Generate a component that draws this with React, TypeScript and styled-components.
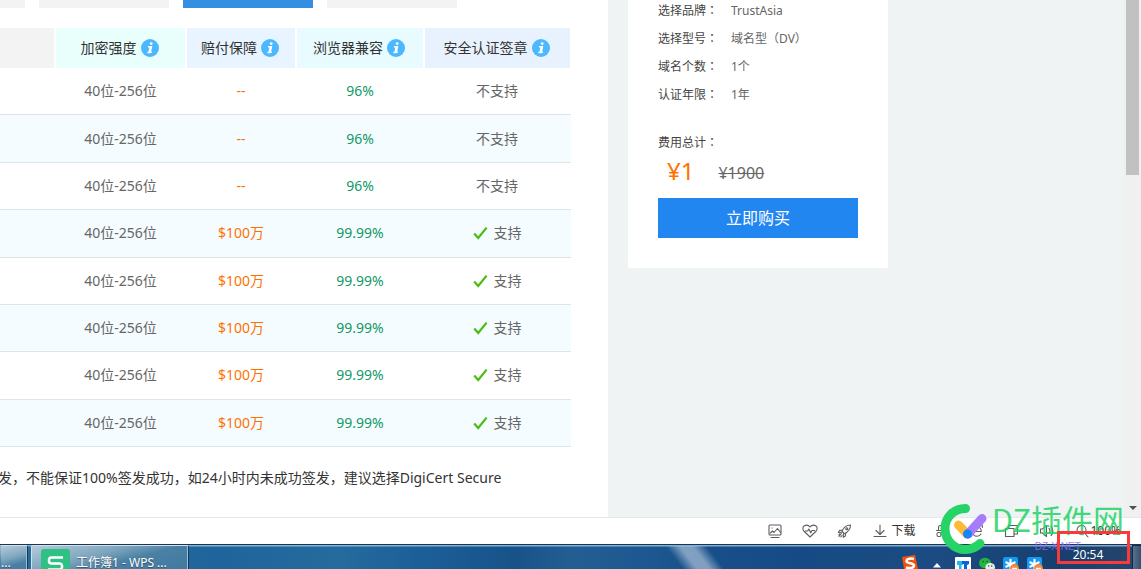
import React from "react";
import styled, { createGlobalStyle } from "styled-components";

const GlobalStyle = createGlobalStyle`
  * { box-sizing: border-box; }
  html, body { margin: 0; padding: 0; overflow: hidden; }
  body {
    background: #fff;
    color: #666;
    font-family: "Noto Sans", "Noto Sans CJK SC", sans-serif;
    font-size: 14px;
    line-height: 20px;
  }
`;

const Screen = styled.div`
  position: relative;
  display: flex;
  flex-direction: column;
  height: 100vh;
  overflow: hidden;
`;

const Viewport = styled.div`
  display: flex;
  flex: 1;
  min-height: 0;
  overflow: hidden;
`;

const Content = styled.main`
  flex: 0 0 608px;
  overflow: hidden;
`;

const Tabs = styled.div`
  display: flex;
  gap: 14px;
  margin-bottom: 20px;
`;

const Tab = styled.div<{ $active?: boolean; $cut?: boolean }>`
  width: ${(p) => (p.$cut ? "25px" : "130px")};
  height: 8px;
  background: ${(p) => (p.$active ? "#368ee0" : "#f3f3f3")};
`;

const Table = styled.table`
  width: 571px;
  height: 419px;
  table-layout: fixed;
  border-collapse: separate;
  border-spacing: 0;
  text-align: center;
`;

const HeadCell = styled.th<{ $bg: string; $width: number }>`
  width: ${(p) => p.$width}px;
  height: 40px;
  padding: 0 2px 0 0;
  background: ${(p) => p.$bg};
  border-right: 2px solid #fff;
  color: #333;
  font-weight: 400;
  &:last-child { border-right-width: 1px; }
`;

const HeadLabel = styled.span`
  display: flex;
  align-items: center;
  justify-content: center;
  gap: 4px;
`;

const Row = styled.tr`
  &:nth-child(even) { background: #f4fcff; }
`;

const Cell = styled.td<{ $color?: string }>`
  padding: 0 2px 0 0;
  border-bottom: 1px solid #dfe4e8;
  color: ${(p) => p.$color || "#666"};
`;

const CellContent = styled.div`
  display: flex;
  align-items: center;
  justify-content: center;
  gap: 6px;
  height: 20px;
`;

const Footnote = styled.p`
  height: 20px;
  margin: 21px 0 0 -2px;
  color: #333;
  white-space: nowrap;
`;

const Side = styled.aside`
  flex: 1;
  padding-left: 20px;
  background: #eff3f4;
`;

const Card = styled.section`
  width: 260px;
  padding: 1px 30px 30px;
  background: #fff;
  font-size: 12px;
`;

const Specs = styled.dl`
  display: grid;
  grid-template-columns: 60px 1fr;
  grid-auto-rows: 20px;
  gap: 8px 13px;
  margin: 0 0 28px;
`;

const Term = styled.dt`
  color: #444;
  white-space: nowrap;
`;

const Value = styled.dd`
  margin: 0;
`;

const Colon = styled.span`
  font-family: "Noto Sans CJK JP", sans-serif;
  line-height: 0;
`;

const TotalLabel = styled.div`
  height: 20px;
  color: #444;
`;

const Prices = styled.div`
  display: flex;
  align-items: center;
  gap: 24px;
  height: 35px;
  margin-bottom: 10px;
  padding-left: 9px;
`;

const Price = styled.strong`
  color: #ff7200;
  font-size: 24px;
  font-weight: 400;
`;

const OldPrice = styled.del`
  font-size: 16px;
  padding-top: 4px;
`;

const BuyButton = styled.button`
  display: block;
  width: 100%;
  height: 40px;
  padding: 0;
  border: 0;
  background: #2186ef;
  color: #fff;
  font: inherit;
  font-size: 16px;
`;

const Scrollbar = styled.div`
  display: flex;
  flex-direction: column;
  justify-content: space-between;
  align-items: center;
  flex: 0 0 17px;
  background: #f0f0f0;
`;

const Thumb = styled.div`
  width: 13px;
  height: 175px;
  background: #c1c1c1;
`;

const ScrollArrow = styled.svg`
  display: block;
  margin-bottom: 5px;
`;

const StatusBar = styled.div`
  display: flex;
  align-items: center;
  justify-content: flex-end;
  gap: 19px;
  height: 27px;
  padding-right: 20px;
  border-top: 1px solid #e6e9ea;
  background: #fff;
`;

const ToolButton = styled.button<{ $gap: number }>`
  display: flex;
  align-items: center;
  gap: ${(p) => p.$gap}px;
  padding: 0;
  border: 0;
  background: none;
  color: #333;
  font: inherit;
  font-size: 12px;
  white-space: nowrap;
`;

const TaskBar = styled.footer`
  height: 25px;
  overflow: hidden;
  border-top: 1px solid #1c3550;
  background:
    linear-gradient(180deg, rgba(160, 205, 240, 0.75) 0, rgba(160, 205, 240, 0.75) 1px, transparent 2px),
    linear-gradient(90deg, #2a6d9c 0, #1f659b 220px, #256b9d 340px, #1c5f97 420px, #175389 515px, #235e93 570px, #1d5990 640px, #185089 700px, #174a84 800px, #1b4b82 940px, #173f6e 1060px, #27466b 100%);
`;

const TaskRow = styled.div`
  position: relative;
  display: flex;
  align-items: flex-start;
  height: 40px;
`;

const Beam = styled.svg`
  position: absolute;
  left: 660px;
  top: 1px;
`;

const TaskButton = styled.button<{ $width: number }>`
  display: flex;
  align-items: center;
  gap: 6px;
  flex: 0 0 ${(p) => p.$width}px;
  height: 40px;
  margin-right: 3px;
  padding: 0 0 4px ${(p) => (p.$width > 100 ? "9px" : "0")};
  border: 1px solid #123a5c;
  border-top-color: #cfe2ee;
  border-left-color: ${(p) => (p.$width > 100 ? "#cfe2ee" : "transparent")};
  border-radius: 2px;
  background: linear-gradient(165deg, #b4cbd9 0, #7ea5be 32%, #4a80a4 50%, #3a769f 100%);
  box-shadow: inset -1px 0 0 #9fc0d4;
  color: #fff;
  font: inherit;
  font-size: 12px;
  line-height: 16px;
  white-space: nowrap;
  overflow: hidden;
  text-shadow: 0 1px 1px rgba(0, 0, 0, 0.4);
`;

const Tray = styled.div`
  position: relative;
  display: flex;
  align-items: center;
  gap: 8px;
  height: 40px;
  margin-left: auto;
`;

const Clock = styled.time`
  align-self: flex-start;
  width: 48px;
  margin-left: 13px;
  color: #fff;
  font-size: 12px;
  text-align: center;
`;

const ShowDesktop = styled.button`
  width: 9px;
  height: 40px;
  margin-left: 12px;
  padding: 0;
  border: 1px solid #102a48;
  border-right: 0;
  background: linear-gradient(90deg, #58718c, #33506f);
`;

const Watermark = styled.div`
  position: absolute;
  right: 17px;
  bottom: 14px;
  display: flex;
  align-items: center;
  gap: 4px;
  height: 52px;
  pointer-events: none;
`;

const WatermarkText = styled.div`
  display: flex;
  flex-direction: column;
  color: #25d366;
  font-family: "Noto Sans CJK SC", sans-serif;
  font-size: 31px;
  font-weight: 400;
  line-height: 32px;
  white-space: nowrap;
  opacity: 0.85;
`;

const WatermarkSite = styled.small`
  margin-top: 4px;
  padding-left: 43px;
  color: #8f6cf0;
  font-family: "Liberation Sans", sans-serif;
  font-size: 10px;
  font-weight: 400;
  line-height: 16px;
`;

const Highlight = styled.div`
  position: absolute;
  right: 11px;
  bottom: 5px;
  width: 73px;
  height: 33px;
  border: 3px solid #f93a3a;
  pointer-events: none;
`;

const InfoIcon = () => (
  <svg width="18" height="18" viewBox="0 0 18 18" aria-hidden="true">
    <circle cx="9" cy="9" r="9" fill="#4cb8ff" />
    <circle cx="10.2" cy="4.6" r="1.4" fill="#fff" />
    <path d="M7 7.7h3.4L9.2 13.3h1.6M6.4 13.6h3" fill="none" stroke="#fff" strokeWidth="1.5" />
    <path d="M9.6 7.5 8.3 13.6" stroke="#fff" strokeWidth="2" />
  </svg>
);

const CheckIcon = () => (
  <svg width="15" height="14" viewBox="0 0 15 14" aria-hidden="true">
    <path d="M1.2 7.6 5.2 12 13.6 1.6" fill="none" stroke="#4dbb12" strokeWidth="2.2" />
  </svg>
);

const Glyph = ({ children }: { children: React.ReactNode }) => (
  <svg
    width="16"
    height="16"
    viewBox="0 0 16 16"
    fill="none"
    stroke="#5c5c62"
    strokeWidth="1.1"
    strokeLinecap="round"
    strokeLinejoin="round"
    aria-hidden="true"
  >
    {children}
  </svg>
);

const tools: { label: string; text?: string; gap?: number; icon: React.ReactNode }[] = [
  {
    label: "图片",
    icon: (
      <>
        <rect x="2" y="2" width="12" height="10" rx="1" />
        <path d="M3.500 10 5.500 8 7 9.500l3.500-4 3 4M4 14.500h8M4.900 5h.2" />
      </>
    ),
  },
  {
    label: "健康",
    icon: (
      <>
        <path d="M8 14 1.8 8C.4 6.2.6 3.9 2.3 2.8 4.2 1.7 6.6 2.2 8 4c1.400-1.800 3.800-2.300 5.700-1.200 1.700 1.100 1.900 3.400.5 5.200z" />
        <path d="M3.500 8h2.200l1.200-2 1.800 3.800 1.300-2.300h2.500" />
      </>
    ),
  },
  {
    label: "加速",
    icon: (
      <>
        <path d="M5 8.2C6.5 4.5 9.5 2 13.5 2c0 4-2.500 7-6.200 8.700zM5.600 7 2.500 7.400 1.300 9.500l3.500-.3M8.700 10l-.3 3-2.200 1.200.2-3.400" />
        <circle cx="9.8" cy="5.8" r="1" />
        <path d="M4.300 10.500 2 13.500M2.800 10.800l-1 1.200M5 12.500l-1.200 1.300" />
      </>
    ),
  },
  { label: "下载", text: "下载", gap: 3, icon: <path d="M8 2v9M4 7.500l4 4 4-4M2 13.500h12" /> },
  {
    label: "无痕",
    icon: (
      <>
        <path d="M4.500 7V4.500c0-1.500.8-2 2-2h4c1.200 0 2 .5 2 2V7M2.500 7.500h12" />
        <rect x="3" y="9.5" width="4" height="4" rx="1.5" />
        <rect x="10" y="9.5" width="4" height="4" rx="1.5" />
        <path d="M7 11h3" />
      </>
    ),
  },
  {
    label: "浏览器模式",
    icon: <path d="M4 8.500h8.300C12.300 5.500 10.500 3.800 8 3.800c-2.700 0-4.600 2-4.600 4.700s2 4.700 4.600 4.700c1.800 0 3.200-.8 4-2.200M2.500 13.500c-.8-1.500.2-4 1.500-6M10.500 2.500c2.500-.8 3.500.2 2.800 2" />,
  },
  { label: "窗口", icon: <path d="M4.5 5.5v-3h9V11H10M1.500 5.500H10v8H1.500z" /> },
  { label: "声音", icon: <path d="M1.5 6v4h2l4 3.500v-11L3.500 6zM10 5.500c1.300 1.200 1.300 3.800 0 5M12 3.500c2.500 2.500 2.500 6.500 0 9" /> },
  {
    label: "缩放",
    text: "100%",
    gap: 0,
    icon: (
      <>
        <circle cx="7.5" cy="7" r="4.5" />
        <path d="m11 10.500 3 3.500" />
      </>
    ),
  },
];

const columns = [
  { title: "", width: 56, bg: "#f3f3f3" },
  { title: "加密强度", width: 131, bg: "#e8fffc" },
  { title: "赔付保障", width: 110, bg: "#e8f4ff" },
  { title: "浏览器兼容", width: 128, bg: "#e8fbff" },
  { title: "安全认证签章", width: 146, bg: "#e8f2ff" },
];

const basic = { payout: "--", browsers: "96%", seal: false };
const full = { payout: "$100万", browsers: "99.99%", seal: true };
const plans = [basic, basic, basic, full, full, full, full, full];

const specs = [
  ["选择品牌", "TrustAsia"],
  ["选择型号", "域名型（DV）"],
  ["域名个数", "1个"],
  ["认证年限", "1年"],
];

const SecurityIcon = () => (
  <svg width="16" height="16" viewBox="0 0 16 16" aria-hidden="true">
    <rect width="15" height="15" rx="2" fill="#129af5" />
    <path d="M7.500 2v11M2.500 5l10 5M2.500 10l10-5" stroke="#fff" strokeWidth="2" />
    <circle cx="11.5" cy="11.5" r="4.5" fill="#f58a32" />
    <path d="M9 11.500h5" stroke="#fff" strokeWidth="1.5" />
  </svg>
);

export default function App() {
  return (
    <Screen>
      <GlobalStyle />
      <Viewport>
        <Content>
          <Tabs aria-hidden="true">
            <Tab $cut />
            <Tab />
            <Tab $active />
            <Tab />
          </Tabs>
          <Table>
            <thead>
              <tr>
                {columns.map((c) => (
                  <HeadCell key={c.width} $bg={c.bg} $width={c.width} scope="col">
                    {c.title && (
                      <HeadLabel>
                        {c.title}
                        <InfoIcon />
                      </HeadLabel>
                    )}
                  </HeadCell>
                ))}
              </tr>
            </thead>
            <tbody>
              {plans.map((p, i) => (
                <Row key={i}>
                  <Cell />
                  <Cell>
                    <CellContent>40位-256位</CellContent>
                  </Cell>
                  <Cell $color="#ff7200">
                    <CellContent>{p.payout}</CellContent>
                  </Cell>
                  <Cell $color="#119966">
                    <CellContent>{p.browsers}</CellContent>
                  </Cell>
                  <Cell>
                    <CellContent>
                      {p.seal && <CheckIcon />}
                      {p.seal ? "支持" : "不支持"}
                    </CellContent>
                  </Cell>
                </Row>
              ))}
            </tbody>
          </Table>
          <Footnote>
            发，不能保证100%签发成功，如24小时内未成功签发，建议选择DigiCert Secure
          </Footnote>
        </Content>
        <Side>
          <Card>
            <Specs>
              {specs.map(([name, value]) => (
                <React.Fragment key={name}>
                  <Term>
                    {name}
                    <Colon>：</Colon>
                  </Term>
                  <Value>{value}</Value>
                </React.Fragment>
              ))}
            </Specs>
            <TotalLabel>
              费用总计<Colon>：</Colon>
            </TotalLabel>
            <Prices>
              <Price>¥1</Price>
              <OldPrice>¥1900</OldPrice>
            </Prices>
            <BuyButton type="button">立即购买</BuyButton>
          </Card>
        </Side>
        <Scrollbar aria-hidden="true">
          <Thumb />
          <ScrollArrow width="8" height="8" viewBox="0 0 8 8">
            <path d="M0 2h8L4 6z" fill="#505050" />
          </ScrollArrow>
        </Scrollbar>
      </Viewport>
      <StatusBar>
        {tools.map((t) => (
          <ToolButton key={t.label} type="button" aria-label={t.label} $gap={t.gap ?? 0}>
            <Glyph>{t.icon}</Glyph>
            {t.text}
          </ToolButton>
        ))}
      </StatusBar>
      <TaskBar>
        <TaskRow>
          <Beam width="70" height="24" viewBox="0 0 70 24" aria-hidden="true">
            <defs>
              <linearGradient id="beam" gradientUnits="userSpaceOnUse" x1="16" y1="14" x2="42" y2="-6">
                <stop offset="0" stopColor="#c5d3e6" stopOpacity="0" />
                <stop offset="0.35" stopColor="#c5d3e6" stopOpacity="0.6" />
                <stop offset="0.65" stopColor="#c5d3e6" stopOpacity="0.6" />
                <stop offset="1" stopColor="#c5d3e6" stopOpacity="0" />
              </linearGradient>
            </defs>
            <path d="M0 0h70v24H0z" fill="url(#beam)" />
          </Beam>
          <TaskButton type="button" $width={28}>...</TaskButton>
          <TaskButton type="button" $width={158}>
            <svg width="29" height="29" viewBox="0 0 29 29" aria-hidden="true">
              <rect width="29" height="29" rx="3" fill="#2fc184" />
              <path d="M22 8.500H10.500a2.500 2.500 0 0 0-2.500 2.500v1a2.500 2.500 0 0 0 2.500 2.500h8a2.500 2.500 0 0 1 2.500 2.500v1a2.500 2.500 0 0 1-2.500 2.500H7" fill="none" stroke="#fff" strokeWidth="2.5" />
            </svg>
            工作簿1 - WPS ...
          </TaskButton>
          <Tray>
            <svg width="18" height="20" viewBox="0 0 18 20" aria-hidden="true">
              <path d="M1 2 14 0 17 14 3.500 17z" fill="#f4510b" />
              <path d="M13 4C9 3 5.500 4 5.500 6.300c0 2.400 7.500 1.400 7.500 4.200 0 2.500-4.500 3.200-8 2" fill="none" stroke="#fff" strokeWidth="2.5" />
            </svg>
            <svg width="20" height="16" viewBox="0 0 20 16" aria-hidden="true">
              <path d="M6 10.500 10 6l4 4.500z" fill="#fff" />
            </svg>
            <svg width="16" height="16" viewBox="0 0 16 16" aria-hidden="true">
              <rect width="16" height="16" rx="1" fill="#fff" />
              <path d="M2 4h6v4H6.500v6H4V8H2z" fill="#25b5f0" />
              <path d="M7 4h7v3l-2 1v6H9V7H7z" fill="#0b63dc" />
            </svg>
            <svg width="16" height="16" viewBox="0 0 16 16" aria-hidden="true">
              <ellipse cx="6" cy="6" rx="6" ry="5.3" fill="#27b43e" />
              <ellipse cx="11.2" cy="10.2" rx="4.8" ry="4.2" fill="#e8eeee" />
              <path d="M4 4.500h.1M8 4.500h.1M9.700 9h.1M12.700 9h.1" stroke="#174020" strokeWidth="1.3" strokeLinecap="round" />
            </svg>
            <SecurityIcon />
            <SecurityIcon />
            <Clock>20:54</Clock>
            <ShowDesktop type="button" aria-label="显示桌面" />
          </Tray>
        </TaskRow>
      </TaskBar>
      <Watermark>
        <svg width="48" height="52" viewBox="0 0 48 52" aria-hidden="true">
          <path d="M25.500 5.500C13 5.500 5 15 5 25.500 5 38 14.500 46.500 25.500 46.500c6 0 10.500-2.200 14.500-6" fill="none" stroke="#25d366" strokeWidth="9" strokeLinecap="round" />
          <path d="M18.500 22 27 31" stroke="#ffb938" strokeWidth="9" strokeLinecap="round" />
          <path d="M42 15.500 28 31" stroke="#a67cfa" strokeWidth="9" strokeLinecap="round" />
          <circle cx="27.5" cy="31" r="4.5" fill="#1685fa" />
        </svg>
        <WatermarkText>
          DZ插件网
          <WatermarkSite>DZ-X.NET</WatermarkSite>
        </WatermarkText>
      </Watermark>
      <Highlight />
    </Screen>
  );
}
